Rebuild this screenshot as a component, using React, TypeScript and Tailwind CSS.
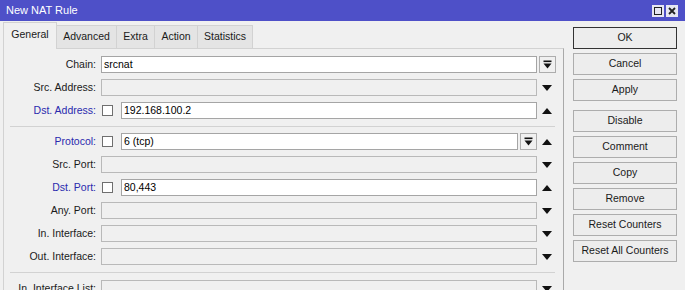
import React from 'react';

type Row = {
  label: string;
  blue?: boolean;
  check?: boolean;
  value?: string;
  enabled?: boolean;
  button?: 'inline' | 'slot';
  arrow?: 'up' | 'down';
};

const TABS = [
  { name: 'General', w: 'w-[54px]', active: true },
  { name: 'Advanced', w: 'w-[61px]' },
  { name: 'Extra', w: 'w-[39px]' },
  { name: 'Action', w: 'w-[44px]' },
  { name: 'Statistics', w: 'w-[56px]' },
];

const GROUP1: Row[] = [
  { label: 'Chain', value: 'srcnat', enabled: true, button: 'slot' },
  { label: 'Src. Address', arrow: 'down' },
  { label: 'Dst. Address', blue: true, check: true, value: '192.168.100.2', enabled: true, arrow: 'up' },
];

const GROUP2: Row[] = [
  { label: 'Protocol', blue: true, check: true, value: '6 (tcp)', enabled: true, button: 'inline', arrow: 'up' },
  { label: 'Src. Port', arrow: 'down' },
  { label: 'Dst. Port', blue: true, check: true, value: '80,443', enabled: true, arrow: 'up' },
  { label: 'Any. Port', arrow: 'down' },
  { label: 'In. Interface', arrow: 'down' },
  { label: 'Out. Interface', arrow: 'down' },
];

const BUTTONS = ['OK', 'Cancel', 'Apply', 'Disable', 'Comment', 'Copy', 'Remove', 'Reset Counters', 'Reset All Counters'];

function DropIcon() {
  return (
    <svg width="9" height="9" viewBox="0 0 9 9">
      <rect x="0.5" y="0.5" width="8" height="1.6" fill="#111" />
      <polygon points="0.5,3.5 8.5,3.5 4.5,8.5" fill="#111" />
    </svg>
  );
}

function Arrow({ dir }: { dir: 'up' | 'down' }) {
  return (
    <svg width="10" height="6" viewBox="0 0 10 6">
      {dir === 'down'
        ? <polygon points="0,0 10,0 5,6" fill="#111" />
        : <polygon points="0,6 10,6 5,0" fill="#111" />}
    </svg>
  );
}

function DropButton() {
  return (
    <div className="flex h-[17px] w-[17px] shrink-0 items-center justify-center border border-[#adadad] bg-[#f0f0f0]">
      <DropIcon />
    </div>
  );
}

function FieldRow({ row }: { row: Row }) {
  return (
    <div className="flex h-[17px] items-center">
      <span className={`w-[92px] shrink-0 text-right ${row.blue ? 'text-[#2a2aae]' : 'text-[#1a1a1a]'}`}>
        {row.label}:
      </span>
      <div className="ml-[5px] flex h-full flex-1 items-center">
        {row.check && (
          <div className="mr-[8px] ml-[1px] h-[11px] w-[11px] shrink-0 border border-[#6f6f6f] bg-white" />
        )}
        <div
          className={`flex h-full flex-1 items-center border px-[2px] text-black ${
            row.enabled ? 'border-[#a5a5a5] bg-white' : 'border-[#b9b9b9] bg-[#f0f0f0]'
          }`}
        >
          {row.value}
        </div>
        {row.button === 'inline' && (
          <div className="ml-[2px]">
            <DropButton />
          </div>
        )}
      </div>
      <div className="ml-px flex w-[18px] shrink-0 items-center justify-center">
        {row.button === 'slot' ? <DropButton /> : row.arrow ? <Arrow dir={row.arrow} /> : null}
      </div>
      <div className="w-[7px] shrink-0" />
    </div>
  );
}

export default function App() {
  return (
    <div className="h-[290px] w-[685px] overflow-hidden bg-[#f0f0f0] font-['Liberation_Sans',Arial,sans-serif] text-[10.5px] text-[#1a1a1a]">

      {/* Title bar */}
      <div className="flex h-[21px] items-center justify-between bg-[#4e50c8] pl-[6px] pr-[7px]">
        <span className="text-[11px] text-white">New NAT Rule</span>
        <div className="flex items-center gap-[2px]">
          <div className="flex h-[12px] w-[12px] items-center justify-center bg-[#e6e6f2]">
            <div className="h-[8px] w-[8px] border border-[#222]" />
          </div>
          <div className="flex h-[12px] w-[12px] items-center justify-center bg-[#e6e6f2]">
            <svg width="8" height="8" viewBox="0 0 8 8">
              <path d="M1 1 L7 7 M7 1 L1 7" stroke="#222" strokeWidth="1.8" />
            </svg>
          </div>
        </div>
      </div>

      <div className="flex">
        {/* Left: tabs + panel */}
        <div className="w-[564px] shrink-0 pl-[3px]">
          <div className="flex h-[27px] items-end">
            {TABS.map(t => (
              <div
                key={t.name}
                className={`flex shrink-0 items-center justify-center border-t border-l border-r text-[10.5px] ${t.w} ${
                  t.active
                    ? 'relative z-10 -mb-px h-[27px] border-[#d2d2d2] bg-[#f0f0f0] pb-[2px]'
                    : '-ml-px h-[23px] border-[#d2d2d2] bg-[#e4e4e4]'
                }`}
              >
                {t.name}
              </div>
            ))}
          </div>

          <div className="h-[250px] border-t border-l border-r border-t-[#d2d2d2] border-l-[#d2d2d2] border-r-[#a9a9a9] pt-[7px]">
            <div className="flex flex-col gap-[6px]">
              {GROUP1.map(r => <FieldRow key={r.label} row={r} />)}
            </div>
            <div className="mt-[7px] mb-[6px] ml-[6px] mr-[8px] h-px bg-[#d2d2d2]" />
            <div className="flex flex-col gap-[6px]">
              {GROUP2.map(r => <FieldRow key={r.label} row={r} />)}
            </div>
            <div className="mt-[7px] mb-[7px] ml-[6px] mr-[8px] h-px bg-[#d2d2d2]" />
            <FieldRow row={{ label: 'In. Interface List', arrow: 'down' }} />
          </div>
        </div>

        {/* Right: buttons */}
        <div className="ml-[9px] flex flex-col pt-[6px]">
          {BUTTONS.map((b, i) => (
            <div
              key={b}
              className={`flex h-[22px] w-[104px] items-center justify-center border text-[10.5px] ${
                i === 0 ? 'border-[#333]' : 'border-[#adadad]'
              } bg-[#ededed] ${i === 0 ? '' : i === 3 ? 'mt-[9px]' : 'mt-[4px]'}`}
            >
              {b}
            </div>
          ))}
        </div>
      </div>
    </div>
  );
}
